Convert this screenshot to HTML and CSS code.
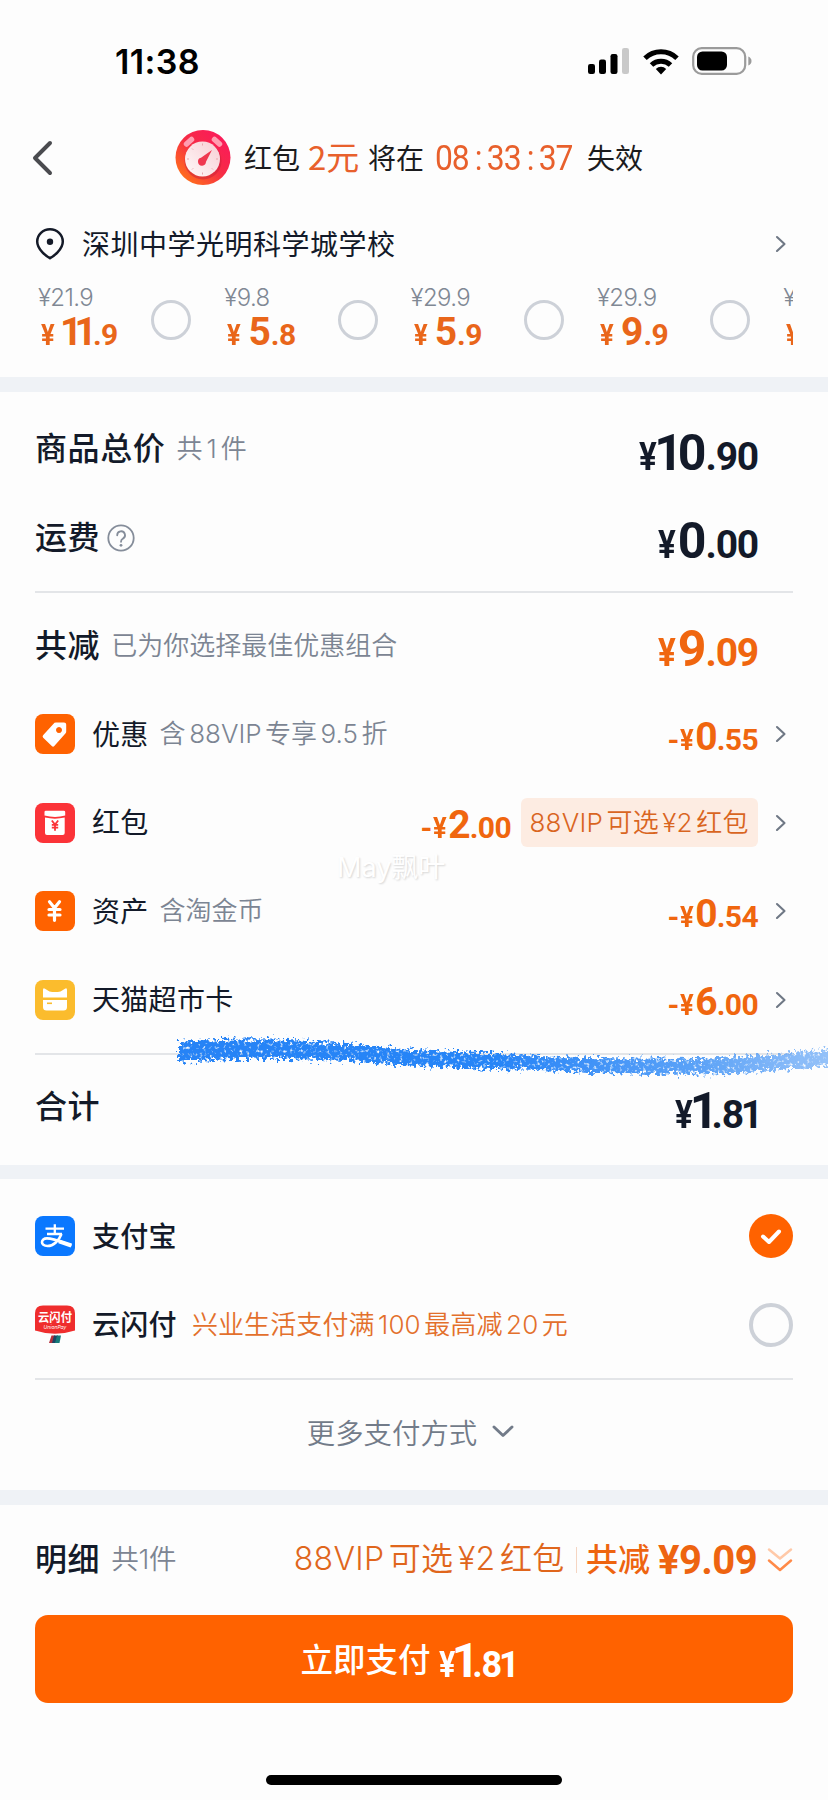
FILE: index.html
```html
<!DOCTYPE html>
<html lang="zh-CN">
<head>
<meta charset="utf-8">
<title>确认支付</title>
<link rel="stylesheet" href="styles.css">
</head>
<body>
<svg class="defs" width="0" height="0">
  <symbol id="chev" viewBox="0 0 12 18"><path d="M2 2l7.5 7L2 16" fill="none" stroke="#6f7885" stroke-width="2.1" stroke-linecap="round" stroke-linejoin="round"/></symbol>
</svg>
<div class="screen">
  <div class="status">
    <span class="clock">11:38</span>
    <svg class="signal" width="42" height="26" viewBox="0 0 42 26"><rect x="0" y="16" width="7" height="10" rx="2.2"/><rect x="11" y="11.500" width="7" height="14.500" rx="2.200"/><rect x="22.500" y="6" width="7" height="20" rx="2.200"/><rect x="34" y="0" width="7" height="26" rx="2.200" fill="#c9c9c9"/></svg>
    <svg class="wifi" width="36" height="27" viewBox="0 0 36 27"><g fill="none" stroke="#000" stroke-width="5"><path d="M2 10.300a23 23 0 0 1 32 0"/><path d="M8.500 17a13.800 13.800 0 0 1 19 0"/></g><path d="M18 26.500l-5.200-5.600a7.500 7.500 0 0 1 10.400 0z"/></svg>
    <svg class="battery" width="60" height="28" viewBox="0 0 60 28"><rect x="1.200" y="1.200" width="52" height="25.600" rx="8.500" fill="none" stroke="#9b9b9b" stroke-width="2.200"/><rect x="5" y="4.500" width="30" height="19" rx="5.500"/><path d="M56.300 9.500q3.200 1.500 3.200 4.500t-3.200 4.500z" fill="#9b9b9b"/></svg>
  </div>

  <div class="header">
    <svg class="back" width="22" height="36" viewBox="0 0 22 36"><path d="M19 3L4 18l15 15" fill="none" stroke="#4a4b4f" stroke-width="4" stroke-linecap="round" stroke-linejoin="round"/></svg>
    <svg class="timer" width="56" height="56" viewBox="0 0 56 56">
      <defs>
        <linearGradient id="tg" x1=".85" y1=".1" x2=".15" y2=".85"><stop offset="0" stop-color="#fb1a5a"/><stop offset=".5" stop-color="#f62c45"/><stop offset="1" stop-color="#ff6a1e"/></linearGradient>
        <linearGradient id="tf" x1="1" y1="0" x2="0" y2="1"><stop offset="0" stop-color="#f7cdd3"/><stop offset="1" stop-color="#fffafa"/></linearGradient>
      </defs>
      <circle cx="28" cy="27.500" r="27.500" fill="url(#tg)"/>
      <g stroke="#ff9db0" stroke-width="5.500" stroke-linecap="round"><path d="M11.500 14l5-4.500M44.500 14l-5-4.500"/></g>
      <circle cx="28" cy="31" r="18.500" fill="#c9203a" opacity=".5"/>
      <circle cx="27.500" cy="29" r="17.500" fill="url(#tf)"/>
      <g stroke="#e9a5ad" stroke-width="1"><path d="M27.500 13.500v2M27.500 42.500v2M12 29h2M41 29h2M17 18.500l1.200 1.200M38 39.500l-1.200-1.200M17 39.500l1.200-1.200"/></g>
      <path d="M37 20L26 27.800a4 4 0 1 0 5 4z" fill="#ef3850"/>
    </svg>
    <span class="h-text h1">红包</span><span class="h-hot h2">2元</span><span class="h-text h3">将在</span><span class="h-hot h-time">08<i>:</i>33<i>:</i>37</span><span class="h-text">失效</span>
  </div>

  <div class="address">
    <svg width="30" height="34" viewBox="0 0 30 34"><path d="M15 31.200C12 29.500 2.200 23 2.200 14.600a12.800 12.300 0 0 1 25.600 0C27.800 23 18 29.500 15 31.200z" fill="none" stroke="#141a28" stroke-width="2.500"/><circle cx="15" cy="14.800" r="3.200" fill="#141a28"/></svg>
    <span class="addr">深圳中学光明科学城学校</span>
    <svg class="chev" width="12" height="18"><use href="#chev"/></svg>
  </div>

  <div class="strip">
    <div class="item"><div class="prices"><span class="old">¥21.9</span><span class="now"><small>¥</small><b class="ones"><i>1</i><i>1</i></b><em>.9</em></span></div><span class="radio"></span></div>
    <div class="item"><div class="prices"><span class="old">¥9.8</span><span class="now"><small>¥</small><b>5</b><em>.8</em></span></div><span class="radio"></span></div>
    <div class="item"><div class="prices"><span class="old">¥29.9</span><span class="now"><small>¥</small><b>5</b><em>.9</em></span></div><span class="radio"></span></div>
    <div class="item"><div class="prices"><span class="old">¥29.9</span><span class="now"><small>¥</small><b>9</b><em>.9</em></span></div><span class="radio"></span></div>
    <div class="item"><div class="prices"><span class="old">¥</span><span class="now"><small>¥</small></span></div></div>
  </div>
  <div class="band"></div>

  <div class="summary">
    <div class="row"><span class="title">商品总价</span><span class="sub">共<i class="n1">1</i>件</span><span class="price"><small>¥</small><b class="ten"><i>1</i>0</b><em>.90</em></span></div>
    <div class="row"><span class="title">运费</span><svg class="help" width="28" height="28" viewBox="0 0 28 28"><g fill="none" stroke="#858d9a" stroke-width="1.800"><circle cx="14" cy="14" r="12.700"/><path d="M10.200 11.300a3.900 3.900 0 1 1 5.800 3.300q-2 1.200-2 3.200" stroke-linecap="round"/></g><circle cx="14" cy="21.300" r="1.400" fill="#858d9a"/></svg><span class="price"><small>¥</small><b>0</b><em>.00</em></span></div>
    <div class="line"></div>
    <div class="row total"><span class="title">共减</span><span class="sub">已为你选择最佳优惠组合</span><span class="price hot"><small>¥</small><b>9</b><em>.09</em></span></div>
    <div class="row"><svg class="ico" width="40" height="40" viewBox="0 0 40 40"><rect width="40" height="40" rx="8" fill="#ff6200"/><path fill-rule="evenodd" d="M19.500 8.800Q20 8.400 21 8.400h8q2.200 0 2.200 2.200v6.900q0 1-.6 1.700L19.300 32q-1.200 1.300-2.500 0l-8.600-8.300q-1.300-1.300.1-2.600zM24 12.900a3 3 0 1 0 .01 0z" fill="#fff"/></svg><span class="name">优惠</span><span class="sub">含<i class="lat">88VIP</i>专享<i class="lat">9.5</i>折</span><span class="price sm hot"><s>-</s><small>¥</small><b>0</b><em>.55</em></span><svg class="chev" width="12" height="18"><use href="#chev"/></svg></div>
    <div class="row"><svg class="ico" width="40" height="40" viewBox="0 0 40 40"><rect width="40" height="40" rx="8" fill="#fb3338"/><path d="M9.500 9q0-1.300 1.300-1.300h18q1.400 0 1.400 1.300v3.500q-10 2.800-20.700 0z" fill="#fff"/><path d="M10 14.600q10 2.300 19.700 0V30q0 2-2 2H12q-2 0-2-2z" fill="#fff"/><path d="M16.800 17.500l3.200 4 3.200-4M16.800 21.800h6.400M16.800 24.600h6.400M20 21.500v6.300" fill="none" stroke="#fb3338" stroke-width="1.800"/></svg><span class="name">红包</span><span class="price sm hot"><s>-</s><small>¥</small><b>2</b><em>.00</em></span><span class="chip"><i class="lat">88VIP</i>可选<i class="lat">¥2</i>红包</span><svg class="chev" width="12" height="18"><use href="#chev"/></svg></div>
    <div class="row"><svg class="ico" width="40" height="40" viewBox="0 0 40 40"><rect width="40" height="40" rx="8" fill="#ff6200"/><path d="M14.500 10.800l5 6.200 5-6.200M14 18.500h11M14 24h11M19.500 17v12.300" fill="none" stroke="#fff" stroke-width="3.200" stroke-linecap="round" stroke-linejoin="round"/></svg><span class="name">资产</span><span class="sub">含淘金币</span><span class="price sm hot"><s>-</s><small>¥</small><b>0</b><em>.54</em></span><svg class="chev" width="12" height="18"><use href="#chev"/></svg></div>
    <div class="row"><svg class="ico" width="40" height="40" viewBox="0 0 40 40"><rect width="40" height="40" rx="8" fill="#fbbc2d"/><path d="M8 10q0-2.500 2-1.300l4.500 2.700q5.500 1.300 11 0L30 8.700q2-1.200 2 1.300v7.500H8z" fill="#fff"/><path d="M8 20h24v7q0 3.500-3.500 3.500h-17Q8 30.500 8 27z" fill="#fff"/><path d="M12 23.300h5" stroke="#fbbc2d" stroke-width="1.600"/></svg><span class="name">天猫超市卡</span><span class="price sm hot"><s>-</s><small>¥</small><b>6</b><em>.00</em></span><svg class="chev" width="12" height="18"><use href="#chev"/></svg></div>
    <div class="line"></div>
    <div class="row sum"><span class="title">合计</span><span class="price"><small>¥</small><b class="one">1</b><em>.8<i>1</i></em></span></div>
    <span class="watermark">May飘叶</span>
    <svg class="brush" width="652" height="50" viewBox="176 1030 652 50">
      <defs>
        <linearGradient id="fade" gradientUnits="userSpaceOnUse" x1="176" y1="0" x2="828" y2="0"><stop offset="0" stop-color="#2583f6"/><stop offset=".5" stop-color="#2885f7"/><stop offset=".8" stop-color="#3f92f6" stop-opacity=".85"/><stop offset="1" stop-color="#4f9af6" stop-opacity=".6"/></linearGradient>
        <filter id="chalk" filterUnits="userSpaceOnUse" x="176" y="1030" width="652" height="50">
          <feTurbulence type="fractalNoise" baseFrequency=".3" numOctaves="2" seed="7" result="n"/>
          <feDisplacementMap in="SourceGraphic" in2="n" scale="15" xChannelSelector="R" yChannelSelector="G" result="d"/>
          <feColorMatrix in="n" type="matrix" values="0 0 0 0 0  0 0 0 0 0  0 0 0 0 0  0 0 -3.500 0 3" result="m"/>
          <feComposite in="d" in2="m" operator="in"/>
          <feGaussianBlur stdDeviation=".5"/>
        </filter>
      </defs>
      <path filter="url(#chalk)" fill="url(#fade)" d="M179 1042Q240 1038 290 1040L350 1044 414 1050 500 1054 580 1058 700 1059 770 1055 840 1048V1065L790 1069 740 1073 660 1074 590 1073 540 1070 460 1068 400 1065 350 1061 290 1059 230 1059 179 1062z"/>
    </svg>
  </div>
  <div class="band thin"></div>

  <div class="pay">
    <div class="row"><svg class="ico" width="40" height="40" viewBox="0 0 40 40"><rect width="40" height="40" rx="8" fill="#0a78ff"/><g fill="none" stroke="#fff"><path d="M10.500 12.700h18.500M19.800 8.300v9.500M12 18h15" stroke-width="2.300"/><path d="M26.500 18C24 24.500 18.500 30 12.500 30c-7.500 0-7-7.600-.5-7.600 6 0 14 3.400 24.500 7.200" stroke-width="2.600"/><path d="M24 25.300l12.300 4.200" stroke-width="4"/></g></svg><span class="name md">支付宝</span><svg class="check" width="44" height="44" viewBox="0 0 44 44"><circle cx="22" cy="22" r="22" fill="#ff6200"/><path d="M14 22.500l6 5.500 10-10.500" fill="none" stroke="#fff" stroke-width="4" stroke-linecap="round" stroke-linejoin="round"/></svg></div>
    <div class="row"><svg class="ico" width="40" height="40" viewBox="0 0 40 40"><path d="M8 0.500h24q8 0 8 8v17q-20 6.500-40 0v-17q0-8 8-8z" fill="#ef2d2d"/><text x="20" y="16.500" text-anchor="middle" class="up-cn" textLength="34" lengthAdjust="spacingAndGlyphs">云闪付</text><text x="20" y="23.500" text-anchor="middle" class="up-en">UnionPay</text><path d="M16.500 30.500h3.500l-2 7.500h-4z" fill="#b5303c"/><path d="M19 30.500h4l-2 7.500h-4z" fill="#1d4463"/><path d="M22 30.500h4l-1.500 7.500h-4.500z" fill="#167a79"/></svg><span class="name md">云闪付</span><span class="promo">兴业生活支付满<i class="lat">100</i>最高减<i class="lat">20</i>元</span><span class="radio big"></span></div>
    <div class="line"></div>
    <div class="more"><span>更多支付方式</span><svg width="24" height="16" viewBox="0 0 24 16"><path d="M3 3l9 8.500L21 3" fill="none" stroke="#727b89" stroke-width="2.900" stroke-linecap="round" stroke-linejoin="round"/></svg></div>
  </div>
  <div class="band"></div>

  <div class="footer">
    <div class="detail"><span class="title">明细</span><span class="sub">共1件</span><span class="vip"><i class="lat">88VIP</i>可选<i class="lat">¥2</i>红包</span><span class="sep"></span><span class="cut">共减</span><span class="cutn">¥9.09</span><svg width="26" height="28" viewBox="0 0 26 28"><g fill="none" stroke-width="2.500" stroke-linecap="round" stroke-linejoin="round"><path d="M2 3.500l11 9 11-9" stroke="#ffc9a8"/><path d="M2 14.500l11 9.500 11-9.500" stroke="#ff8a48"/></g></svg></div>
    <div class="button"><span class="go">立即支付</span><span class="price"><small>¥</small><b class="one">1</b><em>.8<i>1</i></em></span></div>
    <div class="home"></div>
  </div>
</div>
</body>
</html>
```
FILE: styles.css
```css
* { box-sizing: border-box; }
body { margin: 0; background: #fdfdfd; font-family: Inter, "Noto Sans CJK SC", sans-serif; color: #131a29; }
i, em, s { font-style: normal; text-decoration: none; }
svg { display: block; flex: none; }
.defs { position: absolute; }
.screen { width: 828px; height: 1800px; overflow: hidden; }
span { white-space: nowrap; }

.status { height: 122px; padding: 0 76px 0 115px; display: flex; align-items: center; }
.clock { font-size: 34px; font-weight: 600; color: #000; width: 90px; letter-spacing: .4px; }
.signal { margin-left: auto; }
.wifi { margin: 0 13px 0 13px; }

.header { height: 72px; display: flex; align-items: center; padding-left: 31px; }
.timer { margin: 0 13px 0 122px; }
.h-text { font-size: 28px; line-height: 1; color: #1b1b1d; margin-top: 2px; }
.h-hot { line-height: 1; color: #e8602c; }
.h1 { width: 64px; }
.h2 { width: 60px; font-family: "Noto Sans CJK SC", sans-serif; font-size: 33px; margin-top: -3px; }
.h3 { width: 67px; }
.h-time { width: 152px; font-family: Roboto, sans-serif; font-size: 35px; letter-spacing: -1.200px; display: flex; transform: scaleX(.91); transform-origin: left; }
.h-time i { width: 20px; text-align: center; padding-left: 1px; }

.address { height: 94px; padding: 5px 41px 0 35px; display: flex; align-items: center; }
.addr { margin: -1px 0 0 17px; font-size: 28px; letter-spacing: .5px; }
.chev { margin-left: auto; }

.strip { height: 89px; margin: 0 35px; display: flex; overflow: hidden; }
.item { flex: none; width: 186.300px; display: flex; justify-content: space-between; padding-right: 30px; }
.prices { display: flex; flex-direction: column; padding-left: 3px; }
.old { font-size: 24px; font-weight: 300; color: #808894; line-height: 24px; margin-top: -2px; letter-spacing: -.6px; }
.now { font: 700 39px/36px Roboto, sans-serif; color: #e9661a; margin-top: 4px; padding-left: 3px; }
.now small { font-size: 30px; margin-right: 5px; }
.now em { font-size: 30px; letter-spacing: -.5px; }
.ones i { margin: 0 -6px 0 -2px; }
.now .ones { margin-right: 2px; }
.radio { width: 40px; height: 40px; border: 3.500px solid #cdd1d8; border-radius: 50%; margin-top: 12px; }
.band { height: 15px; background: #eff2f6; }
.thin { height: 14px; }

.row { height: 88.500px; display: flex; align-items: center; }
.title { font-size: 32px; font-weight: 500; letter-spacing: .6px; line-height: 1; }
.sub { font-size: 26px; color: #7c8593; margin-left: 11px; line-height: 1; }
.sub, .chip, .promo, .vip, .more { font-weight: 350; }
.n1 { margin: 0 4px; }
.lat { margin: 0 3.500px; }
.line { height: 1.500px; background: #e3e5e8; margin-right: -35px; }
.price { font: 700 50px/50px Roboto, sans-serif; margin: 7px 0 0 auto; }
.price small, .price em { font-size: 39px; line-height: 0; letter-spacing: -1.200px; }
.price small, .now small { display: inline-block; transform: scaleX(.85); transform-origin: left; }
.price b, .now b { font-weight: 700; }
.price b { letter-spacing: -1px; }
.price em i { margin: 0 -4px 0 -2px; }
.price .one { margin: 0 -6px 0 -5px; }
.ten i { margin: 0 -4px 0 -5px; }
.hot { color: #f0660f; }
.price.sm { font-size: 39px; margin-top: 5px; }
.price.sm small, .price.sm em, .price.sm s { font-size: 30px; line-height: 0; letter-spacing: -.6px; }
.sm s { margin-right: 1px; }

.summary { position: relative; height: 773px; padding: 13px 70px 0 35px; }
.help { margin-left: 7px; }
.summary .line { margin-top: 9px; }
.total { margin-top: 9px; }
.sum { margin-top: 8.500px; }
.summary .chev { margin: 0 -29px 0 17px; }
.ico { margin-right: 17px; }
.name { font-size: 28px; letter-spacing: .3px; line-height: 1; margin-top: 1px; }
.md { font-weight: 500; }
.chip { background: #fdece2; color: #d9651f; font-size: 26px; line-height: 49px; border-radius: 6px; width: 237px; padding: 0 5px; margin-left: 10px; letter-spacing: .2px; }
.watermark { position: absolute; left: 337px; top: 454px; font-size: 27px; color: #fff; text-shadow: 1px 1px 2px #d6d6d6; }
.brush { position: absolute; left: 176px; top: 638px; }

.pay { height: 311px; padding: 13px 35px 0; }
.pay .line { margin: 9px 0 0; }
.check, .radio.big { margin: 0 0 0 auto; width: 44px; height: 44px; }
.radio.big { border-width: 4px; }
.up-cn { font: 700 12px "Noto Sans CJK SC", sans-serif; fill: #fff; }
.up-en { font: italic 5px Inter, sans-serif; fill: #fff; }
.promo { font-size: 26px; color: #e3702c; margin-left: 15px; line-height: 1; letter-spacing: .1px; }
.more { height: 104px; padding-right: 6px; display: flex; align-items: center; justify-content: center; gap: 14px; font-size: 28.400px; color: #727b89; }

.footer { padding: 0 35px; }
.detail { height: 110px; padding-bottom: 1px; display: flex; align-items: center; }
.detail .sub { font-size: 27.500px; letter-spacing: -.3px; }
.vip { margin-left: auto; font-size: 32px; color: #e0661c; line-height: 1; margin-top: -2px; letter-spacing: .3px; }
.vip .lat { margin: 0 4.500px; }
.sep { width: 1.500px; height: 26px; background: #f5d5c2; margin: 0 9px 0 11px; }
.cut { font-size: 32px; font-weight: 500; color: #ee6410; line-height: 1; }
.cutn { font: 700 40px/40px Roboto, sans-serif; color: #ee6410; margin: 3px 10px 0 8px; letter-spacing: -.6px; }
.button { height: 88px; border-radius: 13px; background: #ff6200; color: #fff; display: flex; align-items: center; justify-content: center; padding-right: 13px; }
.go { font-size: 32.500px; font-weight: 500; line-height: 1; margin-top: 4px; }
.button .price { margin: 3px 0 0 8px; font-size: 48px; }
.button .price small, .button .price em { font-size: 36px; }
.home { width: 296px; height: 10px; border-radius: 5px; background: #000; margin: 72px auto 0; }
```
